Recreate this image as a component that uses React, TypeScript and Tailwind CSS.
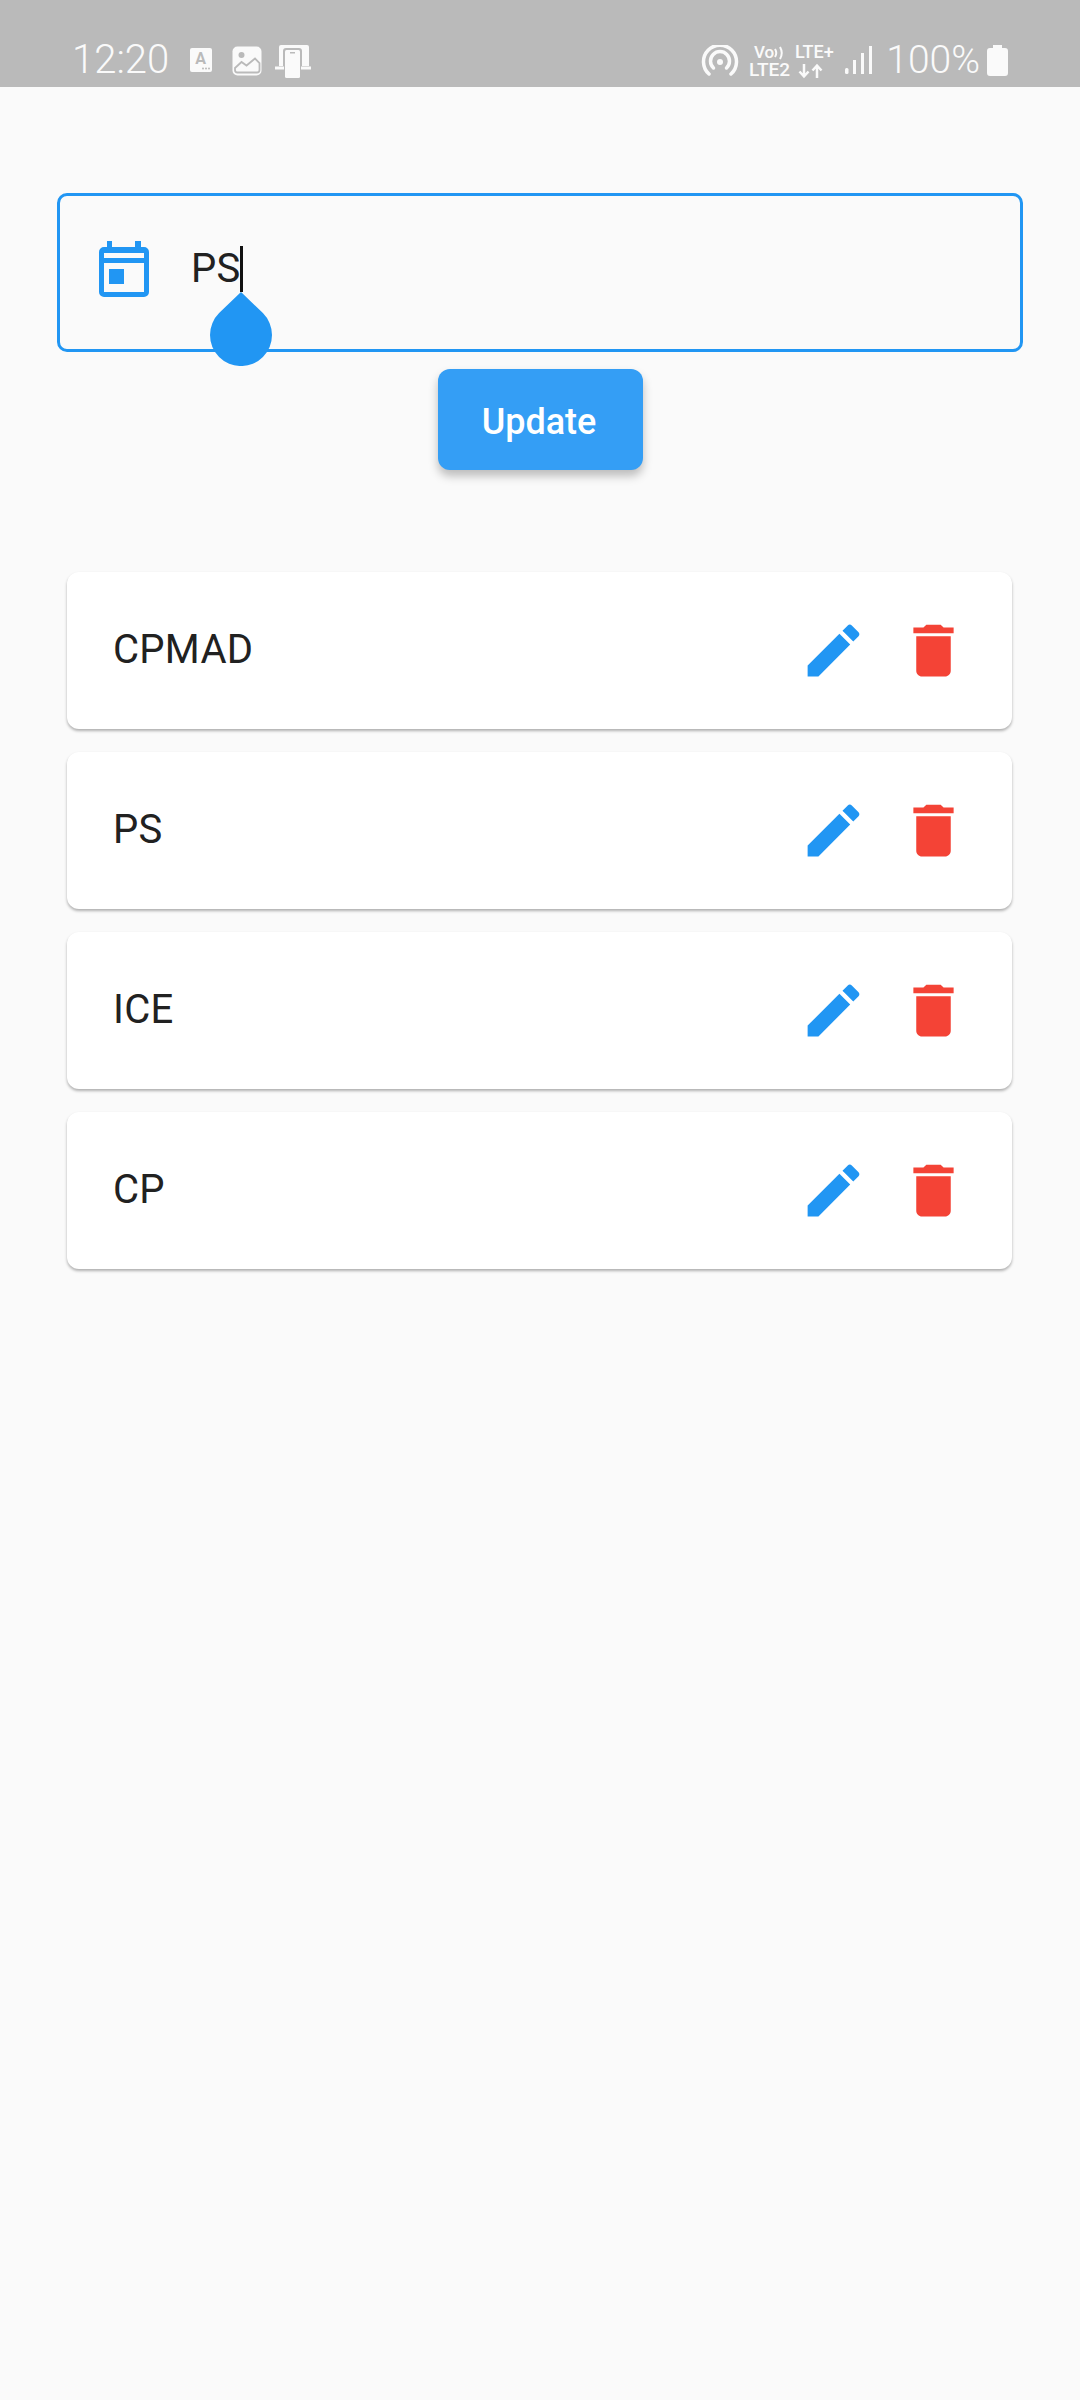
const subjects = ['CPMAD', 'PS', 'ICE', 'CP']

function StatusLeftIcons() {
  return (
    <div className="flex items-start">
      {/* keyboard notification */}
      <svg width="24" height="26" viewBox="0 0 24 26" className="ml-[20px] mt-[7px]">
        <rect x="1" y="1" width="22" height="24" rx="2" fill="#fafafa" />
        <text x="11.500" y="16.500" textAnchor="middle" fontSize="16" fontWeight="700" fill="#bababa" fontFamily="Roboto, sans-serif">A</text>
        <circle cx="14" cy="21.500" r="1" fill="#bababa" />
        <circle cx="17" cy="21.500" r="1" fill="#bababa" />
        <circle cx="20" cy="21.500" r="1" fill="#bababa" />
      </svg>
      {/* gallery notification */}
      <svg width="30" height="30" viewBox="0 0 30 30" className="ml-[19px] mt-[6px]">
        <rect x="0.500" y="0.500" width="29" height="29" rx="5" fill="#fafafa" />
        <circle cx="9.500" cy="9" r="3" fill="#bababa" />
        <path
          d="M3 22L9.500 16L14.500 19.500L23 12.500L27.500 17V24a2.500 2.500 0 0 1-2.500 2.500H5.500A2.500 2.500 0 0 1 3 24Z"
          fill="#fafafa"
          stroke="#bababa"
          strokeWidth="1.800"
        />
      </svg>
      {/* phone link */}
      <svg width="36" height="33" viewBox="0 0 36 33" className="ml-[13px] mt-[5px]">
        <path fill="#fafafa" d="M6 0h26a2 2 0 0 1 2 2v19H4V2a2 2 0 0 1 2-2z" />
        <rect x="8" y="3" width="19" height="30" rx="3" fill="#bababa" />
        <rect x="10" y="5" width="15" height="28" rx="1.500" fill="#fafafa" />
        <rect x="15" y="7" width="5" height="1.500" fill="#bababa" />
        <rect x="0" y="21.500" width="9" height="3" fill="#fafafa" />
        <rect x="26" y="21.500" width="10" height="3" fill="#fafafa" />
      </svg>
    </div>
  )
}

function StatusRightIcons() {
  return (
    <div className="flex items-start">
      {/* hotspot */}
      <svg width="38" height="32" viewBox="0 0 38 32" fill="none" stroke="#fafafa" strokeWidth="3.500" strokeLinecap="round" className="mt-[5px]">
        <path d="M8 29A16.500 16.500 0 1 1 30 29" />
        <path d="M12.500 23A9.500 9.500 0 1 1 25.500 23" />
        <circle cx="19" cy="17" r="3" fill="#fafafa" stroke="none" />
      </svg>
      {/* volte + lte */}
      <svg width="88" height="36" viewBox="0 0 88 36" className="ml-[10px] mt-[4px] overflow-visible" fontFamily="Roboto, sans-serif" fontWeight="500" fill="#fafafa">
        <text x="5" y="14" fontSize="17">Vo</text>
        <path d="M26 5q2.500 4 0 8M31 3q3.500 6 0 12" fill="none" stroke="#fafafa" strokeWidth="2" />
        <text x="0" y="32" fontSize="19">LTE2</text>
        <text x="46" y="14" fontSize="18">LTE+</text>
        <path d="M55 20v12M50.500 27.500l4.500 5 4.500-5M68 34V22M63.500 26.500l4.500-5 4.500 5" fill="none" stroke="#fafafa" strokeWidth="2.500" />
      </svg>
      {/* signal */}
      <svg width="28" height="30" viewBox="0 0 28 30" className="ml-[8px] mt-[5px]" fill="#fafafa">
        <rect x="0" y="23" width="3.500" height="6" rx="1.500" />
        <rect x="8" y="15" width="3" height="14" />
        <rect x="16" y="8" width="3" height="21" />
        <rect x="24" y="1" width="3" height="28" />
      </svg>
      <span className="ml-[13px] mt-[1px] text-[39px] leading-none font-light text-[#fafafa]">100%</span>
      {/* battery */}
      <svg width="21" height="31" viewBox="0 0 21 31" className="ml-[7px] mt-[5px]" fill="#fafafa">
        <path d="M6 0h9v3h3a3 3 0 0 1 3 3v22a3 3 0 0 1-3 3H3a3 3 0 0 1-3-3V6a3 3 0 0 1 3-3h3z" />
      </svg>
    </div>
  )
}

export default function App() {
  return (
    <div className="min-h-[2400px] bg-[#fafafa] font-[Roboto,sans-serif]">
      {/* Status bar */}
      <div className="flex h-[87px] items-end justify-between bg-[#bababa] pb-[7px] pl-[72px] pr-[72px]">
        <div className="flex items-start">
          <span className="text-[40px] leading-none font-light text-[#fafafa]">12:20</span>
          <StatusLeftIcons />
        </div>
        <StatusRightIcons />
      </div>

      {/* Subject field */}
      <div className="mx-[57px] mt-[106px] flex h-[159px] items-center rounded-[10px] border-[3px] border-[#2196f3] pb-[7px] pl-[39px]">
        <svg width="50" height="56" viewBox="0 0 50 56" fill="#2196f3">
          <path
            fillRule="evenodd"
            d="M8 0h5v6h23V0h6v6h3a5 5 0 0 1 5 5v40a5 5 0 0 1-5 5H5a5 5 0 0 1-5-5V11a5 5 0 0 1 5-5h3zM5 12v5h40v-5zM5 22v29h40V22z"
          />
          <rect x="10" y="28" width="15" height="15" />
        </svg>
        <span className="ml-[42px] text-[40px] leading-none tracking-[0.3px] text-[#212121]">PS</span>
        <div className="relative -ml-[1px] h-[46px] w-[3px] bg-[#111111]">
          <svg width="62" height="74" viewBox="0 0 62 74" fill="#2196f3" className="absolute left-[-30px] top-[46px]">
            <path d="M31 0L9.100 21.100A31 31 0 1 0 52.900 21.100Z" />
          </svg>
        </div>
      </div>

      {/* Update button */}
      <div className="mt-[17px] flex justify-center">
        <button className="h-[101px] w-[205px] rounded-[12px] bg-[#349ef5] pr-[2px] pt-[5px] text-[36px] font-medium text-white shadow-[0_6px_10px_rgba(0,0,0,0.25)]">
          Update
        </button>
      </div>

      {/* Subject list */}
      <div className="ml-[67px] mr-[68px] mt-[102px] flex flex-col gap-[23px]">
        {subjects.map((subject) => (
          <div
            key={subject}
            className="flex h-[157px] items-center justify-between rounded-[12px] bg-white pl-[46px] pr-[44px] shadow-[0_2px_3px_rgba(0,0,0,0.3)]"
          >
            <span className="pb-[2px] text-[40px] leading-none tracking-[0.3px] text-[#212121]">{subject}</span>
            <div className="flex items-center gap-[31px]">
              <svg width="69" height="69" viewBox="0 0 24 24" fill="#2196f3">
                <path d="M3 17.250V21h3.750L17.810 9.940l-3.750-3.750L3 17.250zM20.710 7.040c.39-.39.39-1.020 0-1.410l-2.340-2.340c-.39-.39-1.020-.39-1.410 0l-1.830 1.830 3.750 3.750 1.830-1.830z" />
              </svg>
              <svg width="69" height="69" viewBox="0 0 24 24" fill="#f44336">
                <path d="M6 19c0 1.100.9 2 2 2h8c1.100 0 2-.9 2-2V7H6v12zM19 4h-3.500l-1-1h-5l-1 1H5v2h14V4z" />
              </svg>
            </div>
          </div>
        ))}
      </div>
    </div>
  )
}
